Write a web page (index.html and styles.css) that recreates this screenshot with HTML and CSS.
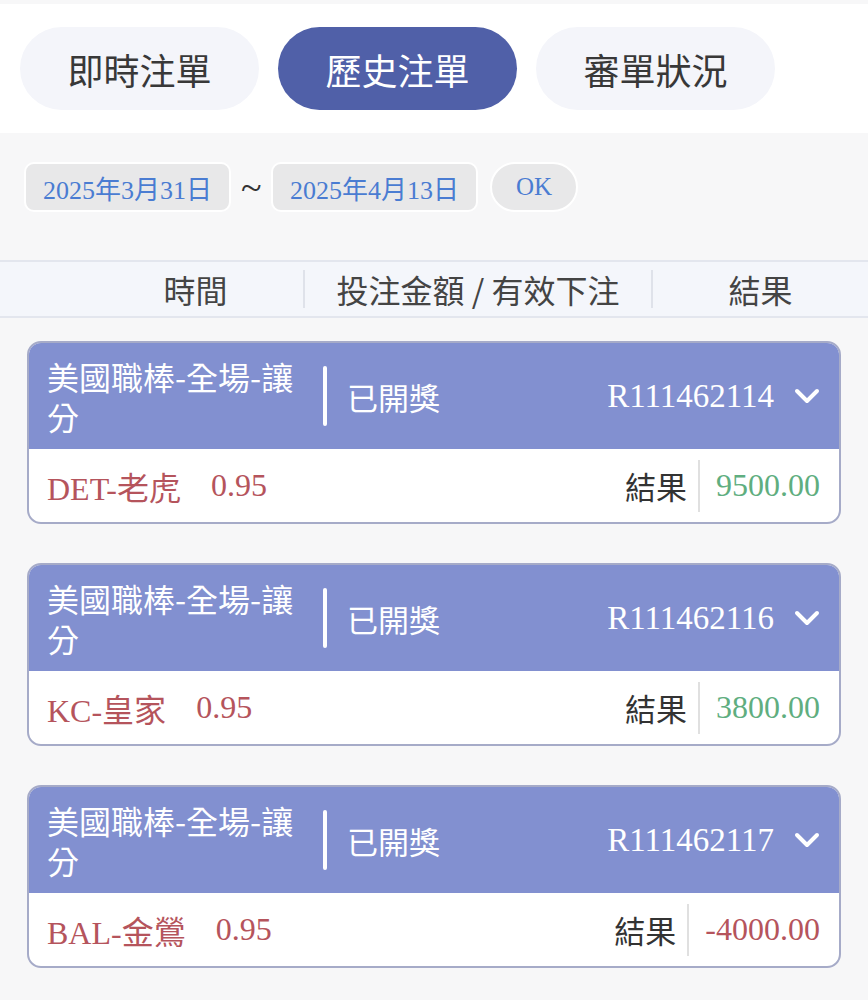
FILE: index.html
```html
<html>
    <head>
        <meta charset="utf-8">
        <link rel="stylesheet" href="styles.css">
    </head>
    <body>
        <div class="topbar">
            <div class="tab">即時注單</div>
            <div class="tab tab-active">歷史注單</div>
            <div class="tab">審單狀況</div>
        </div>

        <div class="dates">
            <div class="date-pill">2025年3月31日</div>
            <div class="tilde">~</div>
            <div class="date-pill">2025年4月13日</div>
            <div class="date-pill ok">OK</div>
        </div>

        <div class="table-head">
            <div class="col col-time">時間</div>
            <div class="col col-amount"><span>投注金額 / 有效下注</span></div>
            <div class="col col-result"><span>結果</span></div>
        </div>

        <div class="list">
            <div class="card">
                <div class="card-head">
                    <div class="card-title">美國職棒-全場-讓分</div>
                    <div class="bar"></div>
                    <div class="card-status">已開獎</div>
                    <div class="card-no">R111462114</div>
                    <svg class="chevron" width="26" height="16" viewBox="0 0 26 16">
                        <path d="M3 3 L13 13 L23 3" fill="none" stroke="#fff" stroke-width="4" stroke-linecap="round" stroke-linejoin="round"/>
                    </svg>
                </div>
                <div class="card-body">
                    <div class="team">DET-老虎</div>
                    <div class="odds">0.95</div>
                    <div class="label">結果</div>
                    <div class="sep"></div>
                    <div class="amount win">9500.00</div>
                </div>
            </div>

            <div class="card">
                <div class="card-head">
                    <div class="card-title">美國職棒-全場-讓分</div>
                    <div class="bar"></div>
                    <div class="card-status">已開獎</div>
                    <div class="card-no">R111462116</div>
                    <svg class="chevron" width="26" height="16" viewBox="0 0 26 16">
                        <path d="M3 3 L13 13 L23 3" fill="none" stroke="#fff" stroke-width="4" stroke-linecap="round" stroke-linejoin="round"/>
                    </svg>
                </div>
                <div class="card-body">
                    <div class="team">KC-皇家</div>
                    <div class="odds">0.95</div>
                    <div class="label">結果</div>
                    <div class="sep"></div>
                    <div class="amount win">3800.00</div>
                </div>
            </div>

            <div class="card">
                <div class="card-head">
                    <div class="card-title">美國職棒-全場-讓分</div>
                    <div class="bar"></div>
                    <div class="card-status">已開獎</div>
                    <div class="card-no">R111462117</div>
                    <svg class="chevron" width="26" height="16" viewBox="0 0 26 16">
                        <path d="M3 3 L13 13 L23 3" fill="none" stroke="#fff" stroke-width="4" stroke-linecap="round" stroke-linejoin="round"/>
                    </svg>
                </div>
                <div class="card-body">
                    <div class="team">BAL-金鶯</div>
                    <div class="odds">0.95</div>
                    <div class="label">結果</div>
                    <div class="sep"></div>
                    <div class="amount lose">-4000.00</div>
                </div>
            </div>
        </div>
    </body>
</html>
```

FILE: styles.css
```css
body {
    margin: 0;
    background: #f7f7f8;
    font-family: "Noto Sans CJK TC", sans-serif;
    color: #333;
}
.topbar {
    margin-top: 4px;
    background: #fff;
    display: flex;
    gap: 19px;
    padding: 23px 20px;
}
.tab {
    width: 239px;
    height: 83px;
    border-radius: 42px;
    background: #f4f5fa;
    display: flex;
    align-items: center;
    justify-content: center;
    font-size: 36px;
    color: #383838;
}
.tab-active {
    background: #5060a8;
    color: #fff;
}
.dates {
    display: flex;
    align-items: center;
    gap: 10px;
    padding: 29px 24px 0;
}
.date-pill {
    height: 46px;
    padding: 0 17px;
    border: 2px solid #fff;
    border-radius: 10px;
    background: #e8e8e9;
    display: flex;
    align-items: center;
    font-family: "Liberation Serif", "Noto Sans CJK TC", serif;
    font-size: 26px;
    color: #4a7cd2;
}
.tilde {
    font-family: "Liberation Serif", serif;
    font-size: 38px;
    line-height: 40px;
    color: #333;
    width: 20px;
    text-align: center;
}
.ok {
    margin-left: 2px;
    padding: 0 24px;
    border-radius: 25px;
    font-size: 25px;
}
.table-head {
    margin-top: 48px;
    height: 54px;
    background: #f4f6fb;
    border-top: 2px solid #e3e6ee;
    border-bottom: 2px solid #e3e6ee;
    display: flex;
    font-size: 32px;
    color: #444;
}
.col {
    display: flex;
    align-items: center;
    justify-content: center;
}
.col-time {
    width: 215px;
    padding-left: 88px;
}
.col-amount {
    width: 346px;
    border-left: 2px solid #dfe2ea;
    margin: 8px 0;
}
.col-result {
    flex: 1;
    border-left: 2px solid #dfe2ea;
    margin: 8px 0;
}
.list {
    padding: 23px 27px;
    display: flex;
    flex-direction: column;
    gap: 39px;
}
.card {
    border: 2px solid #a6abc8;
    border-radius: 14px;
    overflow: hidden;
    background: #fff;
}
.card-head {
    background: #8290d0;
    color: #fff;
    display: flex;
    align-items: center;
    padding: 13px 19px 13px 18px;
}
.card-title {
    width: 256px;
    font-size: 32px;
    line-height: 40px;
}
.bar {
    width: 4px;
    height: 60px;
    background: #fff;
    border-radius: 2px;
    margin: 0 20px 0 20px;
}
.card-status {
    font-size: 31px;
    flex: 1;
}
.card-no {
    font-family: "Liberation Serif", serif;
    font-size: 33px;
}
.chevron {
    margin-left: 20px;
}
.card-body {
    height: 73px;
    display: flex;
    align-items: center;
    padding: 0 19px 0 18px;
    font-family: "Liberation Serif", "Noto Sans CJK TC", serif;
    font-size: 32px;
    color: #b5545c;
}
.odds {
    margin-left: 30px;
    flex: 1;
}
.label {
    font-family: "Noto Sans CJK TC", sans-serif;
    font-size: 31px;
    color: #333;
}
.sep {
    width: 2px;
    height: 52px;
    background: #e0e0e0;
    margin: 0 16px 0 11px;
}
.win {
    color: #5fae80;
}
.lose {
    color: #b5545c;
}
```
